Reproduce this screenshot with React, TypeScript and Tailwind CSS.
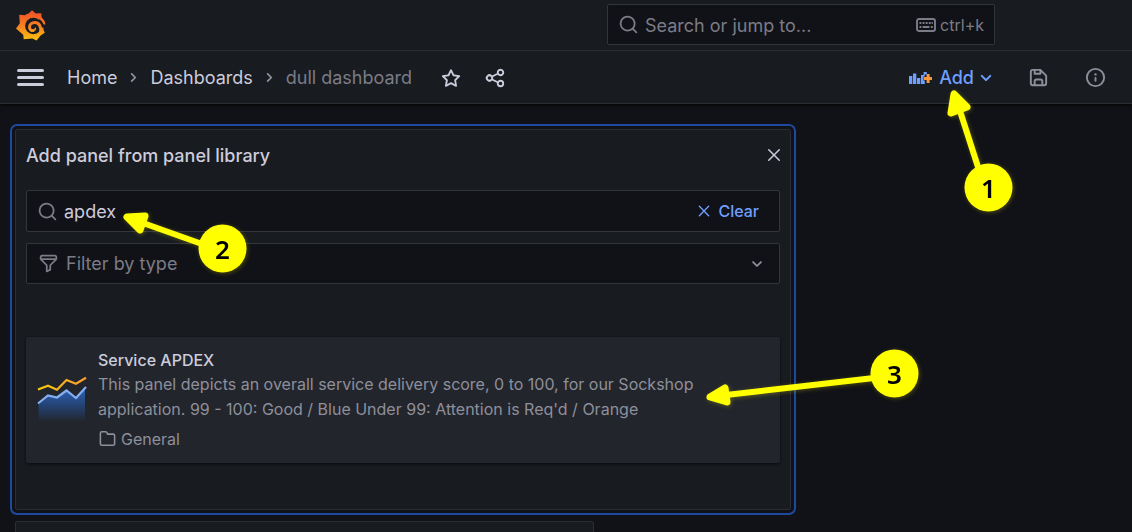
import type { ReactNode } from "react";

const paths = {
  search:
    "M21.71,20.29,18,16.61A9,9,0,1,0,16.61,18l3.68,3.68a1,1,0,0,0,1.42,0A1,1,0,0,0,21.71,20.29ZM11,18a7,7,0,1,1,7-7A7,7,0,0,1,11,18Z",
  times:
    "M13.41,12l6.3-6.29a1,1,0,1,0-1.42-1.42L12,10.59,5.71,4.29A1,1,0,0,0,4.29,5.71L10.59,12l-6.3,6.29a1,1,0,0,0,0,1.42,1,1,0,0,0,1.42,0L12,13.41l6.29,6.3a1,1,0,0,0,1.42,0,1,1,0,0,0,0-1.42Z",
  angleDown:
    "M17,9.17a1,1,0,0,0-1.41,0L12,12.71,8.46,9.17a1,1,0,0,0-1.41,0,1,1,0,0,0,0,1.42l4.24,4.24a1,1,0,0,0,1.42,0L17,10.59A1,1,0,0,0,17,9.17Z",
  angleRight:
    "M14.83,11.29,10.59,7.05a1,1,0,0,0-1.42,0,1,1,0,0,0,0,1.41L12.71,12,9.17,15.54a1,1,0,0,0,0,1.41,1,1,0,0,0,.71.29,1,1,0,0,0,.71-.29l4.24-4.24A1,1,0,0,0,14.83,11.29Z",
  star: "M22,9.67A1,1,0,0,0,21.14,9l-5.69-.83L12.9,3a1,1,0,0,0-1.8,0L8.55,8.16,2.86,9a1,1,0,0,0-.81.68,1,1,0,0,0,.25,1l4.13,4-1,5.68A1,1,0,0,0,6.9,21.44L12,18.77l5.1,2.67a.93.93,0,0,0,.46.12,1,1,0,0,0,.59-.19,1,1,0,0,0,.4-1l-1-5.68,4.13-4A1,1,0,0,0,22,9.67Zm-6.15,4a1,1,0,0,0-.29.88l.72,4.2-3.76-2a1.06,1.06,0,0,0-.94,0l-3.76,2,.72-4.2a1,1,0,0,0-.29-.88l-3-3,4.21-.61a1,1,0,0,0,.76-.55L12,5.7l1.88,3.82a1,1,0,0,0,.76.55l4.21.61Z",
  share:
    "M18,14a4,4,0,0,0-3.08,1.48l-5.1-2.35a3.64,3.64,0,0,0,0-2.26l5.1-2.35A4,4,0,1,0,14,6a4.17,4.17,0,0,0,.07.71L8.79,9.14a4,4,0,1,0,0,5.72l5.28,2.43A4.17,4.17,0,0,0,14,18a4,4,0,1,0,4-4ZM18,4a2,2,0,1,1-2,2A2,2,0,0,1,18,4ZM6,14a2,2,0,1,1,2-2A2,2,0,0,1,6,14Zm12,6a2,2,0,1,1,2-2A2,2,0,0,1,18,20Z",
  save: "M20.71,9.29l-6-6a1,1,0,0,0-.32-.21A1.09,1.09,0,0,0,14,3H6A3,3,0,0,0,3,6V18a3,3,0,0,0,3,3H18a3,3,0,0,0,3-3V10A1,1,0,0,0,20.71,9.29ZM9,5h4V7H9Zm6,14H9V16a1,1,0,0,1,1-1h4a1,1,0,0,1,1,1Zm4-1a1,1,0,0,1-1,1H17V16a3,3,0,0,0-3-3H10a3,3,0,0,0-3,3v3H6a1,1,0,0,1-1-1V6A1,1,0,0,1,6,5H7V8A1,1,0,0,0,8,9h6a1,1,0,0,0,1-1V6.41l4,4Z",
  info: "M12,2A10,10,0,1,0,22,12,10,10,0,0,0,12,2Zm0,18a8,8,0,1,1,8-8A8,8,0,0,1,12,20Zm0-8.5a1,1,0,0,0-1,1v3a1,1,0,0,0,2,0v-3A1,1,0,0,0,12,11.5Zm0-4a1.25,1.25,0,1,0,1.25,1.25A1.25,1.25,0,0,0,12,7.5Z",
  folder:
    "M19,5.5H12.72l-.32-1a3,3,0,0,0-2.84-2H5a3,3,0,0,0-3,3v13a3,3,0,0,0,3,3H19a3,3,0,0,0,3-3V8.5A3,3,0,0,0,19,5.5Zm1,13a1,1,0,0,1-1,1H5a1,1,0,0,1-1-1V5.5a1,1,0,0,1,1-1H9.56a1,1,0,0,1,.95.68l.54,1.64A1,1,0,0,0,12,7.5h7a1,1,0,0,1,1,1Z",
  filter:
    "M19,2H5A3,3,0,0,0,2,5V6.17a3,3,0,0,0,.25,1.2l0,.06a2.81,2.81,0,0,0,.59.86L9,14.41V21a1,1,0,0,0,.47.85A1,1,0,0,0,10,22a1,1,0,0,0,.45-.11l4-2A1,1,0,0,0,15,19V14.41l6.12-6.12a2.81,2.81,0,0,0,.59-.86l0-.06A3,3,0,0,0,22,6.17V5A3,3,0,0,0,19,2ZM13.29,13.29A1,1,0,0,0,13,14v4.38l-2,1V14a1,1,0,0,0-.29-.71L5.41,8H18.59ZM20,6H4V5A1,1,0,0,1,5,4H19a1,1,0,0,1,1,1Z",
};

function Icon({ name, className = "size-6" }: { name: keyof typeof paths; className?: string }) {
  return (
    <svg viewBox="0 0 24 24" fill="currentColor" aria-hidden="true" className={`shrink-0 ${className}`}>
      <path d={paths[name]} />
    </svg>
  );
}

function Logo() {
  return (
    <svg viewBox="0 0 32 32" fill="none" aria-hidden="true" className="size-8">
      <defs>
        <linearGradient id="logo" x1="0" y1="4" x2="0" y2="32" gradientUnits="userSpaceOnUse">
          <stop stopColor="#f1552a" />
          <stop offset="0.5" stopColor="#f68420" />
          <stop offset="1" stopColor="#fcc60c" />
        </linearGradient>
      </defs>
      <path
        fill="url(#logo)"
        d="M17 1.200 20.800 4.600Q23.500 3.900 26.200 4.300L26.700 8.600Q30 11.500 30.400 15.200L28.700 17.500 28.400 20.500 29.800 23.800 25.600 26.500 21.600 31.600 17.300 29.600 8.700 30.300 8.200 25.800 1 19.600 4.800 14.200 4.200 5.800 10 6.200Q11.800 4.900 13.600 4.500Z"
      />
      <circle cx="18.400" cy="17" r="8.300" fill="#181b1f" />
      <path fill="#181b1f" d="M23.500 9.800Q27 11.500 28.800 15.500L30.600 15.600 29.500 18.800 25 18.500Z" />
      <path
        stroke="url(#logo)"
        strokeWidth="3"
        strokeLinecap="round"
        d="M25.600 23C26.400 17.300 23.900 13.500 19.900 13.500C16.600 13.500 14.500 15.600 14.500 18.200C14.500 20.500 16.300 21.700 18 21.600"
      />
      <path
        stroke="url(#logo)"
        strokeWidth="1.600"
        strokeLinecap="round"
        d="M17.800 21.900C19.600 21.700 20.600 20.500 20.300 19.300"
      />
    </svg>
  );
}

function KeyboardIcon() {
  return (
    <svg viewBox="0 0 20 14" fill="none" aria-hidden="true" className="h-[14px] w-5 shrink-0">
      <rect x="1" y="1" width="18" height="12" rx="2" stroke="currentColor" strokeWidth="1.900" />
      <path
        d="M3.500 5h1.900M6.600 5h1.900M9.700 5h1.900M12.800 5h1.900M15.600 5h1.200M3.500 9h1.900M6.600 9h6.800M14.800 9h1.900"
        stroke="currentColor"
        strokeWidth="1.900"
      />
    </svg>
  );
}

function AddPanelIcon() {
  return (
    <svg viewBox="0 0 24 14" aria-hidden="true" className="h-[14px] w-6 shrink-0">
      <path
        fill="#6e9fff"
        d="M1 5h3.300v8H1zM5 2.500h3.300V13H5zM9 7h3.300v6H9zM13 4h2.600V1h3.200v2.500h-2v2h-1.300v4h1.300V13H13z"
      />
      <path fill="#f9983b" d="M18.600 3h3v2.900H24v3h-2.400v3h-3v-3h-2.700v-3h2.700z" />
    </svg>
  );
}

function ChartIcon() {
  return (
    <svg viewBox="0 0 50 48" fill="none" aria-hidden="true" className="h-12 w-[50px] shrink-0">
      <defs>
        <linearGradient id="area" x1="0" y1="12" x2="0" y2="46" gradientUnits="userSpaceOnUse">
          <stop stopColor="#2f64b8" />
          <stop offset="1" stopColor="#1f60c4" stopOpacity="0" />
        </linearGradient>
        <linearGradient id="line" x1="0" y1="0" x2="50" y2="0" gradientUnits="userSpaceOnUse">
          <stop stopColor="#f2cc0c" />
          <stop offset="1" stopColor="#ff9830" />
        </linearGradient>
      </defs>
      <path d="M1.500 27 11 19.500l9 2L29.500 14l9.500 7.500L48 12v34H1.500z" fill="url(#area)" />
      <path d="M1 27.500 11 19.500l9 2L29.500 14.500l9.500 7.500L49 11" stroke="#84aff1" strokeWidth="2.200" />
      <path d="m1 13.500 10-3.700 9 4L29.500 4 39 7.800 49 1.800" stroke="url(#line)" strokeWidth="2.200" />
    </svg>
  );
}

function IconButton({ label, children }: { label: string; children: ReactNode }) {
  return (
    <button type="button" aria-label={label} className="flex items-center justify-center">
      {children}
    </button>
  );
}

const markers = [
  { label: "1", x: 988.5, y: 187.5, line: "M978 167 960 111", head: "M954 94 951 113 967 107z" },
  { label: "2", x: 222.5, y: 248.5, line: "M202 244 143 223", head: "M127 217 145 216 140 230z" },
  { label: "3", x: 894.5, y: 373.5, line: "M874 378 726 395", head: "M710 397 725 388 727 402z" },
];

function Annotations() {
  return (
    <svg
      width="1132"
      height="532"
      viewBox="0 0 1132 532"
      className="pointer-events-none absolute top-0 left-0 drop-shadow-[1px_1px_2px_rgba(255,255,0,0.25)]"
    >
      {markers.map((m) => (
        <g key={m.label} stroke="#ffff00" fill="#ffff00" strokeLinejoin="round">
          <path d={m.line} strokeWidth="6" />
          <path d={m.head} strokeWidth="7" />
          <circle cx={m.x} cy={m.y} r="24" stroke="none" />
          <text
            x={m.x}
            y={m.y + 10}
            textAnchor="middle"
            stroke="none"
            className="fill-black font-['Noto_Sans',sans-serif] text-[26px] font-semibold"
          >
            {m.label}
          </text>
        </g>
      ))}
    </svg>
  );
}

export default function App() {
  return (
    <div className="relative min-h-screen overflow-hidden bg-[#111217] font-['Inter',sans-serif] text-[18px] text-[#ccccdc]">
      <header className="border-b border-[#2d2e34] bg-[#181b1f] shadow-[0_1px_4px_rgba(0,0,0,0.9)]">
        <div className="flex h-[51px] items-center border-b border-[#2d2e34] pr-[137px] pb-px pl-[15px]">
          <a href="#home" aria-label="Grafana">
            <Logo />
          </a>
          <label className="ml-auto flex h-[41px] w-[388px] items-center rounded-xs border border-[#34353b] bg-[#111217] px-[10px] text-[#7b7c87]">
            <Icon name="search" className="size-[21px]" />
            <input
              aria-label="Search or jump to"
              placeholder="Search or jump to..."
              className="ml-[5px] min-w-0 flex-1 bg-transparent pt-px pl-px outline-none placeholder:text-[#7b7c87]"
            />
            <KeyboardIcon />
            <span className="ml-1 text-base">ctrl+k</span>
          </label>
        </div>
        <div className="flex h-[52px] items-center pt-px pr-[25px] pl-[17px]">
          <button type="button" aria-label="Toggle menu" className="flex w-[27px] flex-col gap-1">
            <span className="h-[3px] rounded-full bg-[#ccccdc]" />
            <span className="h-[3px] rounded-full bg-[#ccccdc]" />
            <span className="h-[3px] rounded-full bg-[#ccccdc]" />
          </button>
          <nav aria-label="Breadcrumbs" className="ml-[23px] flex items-center gap-[6px]">
            <a href="#home">Home</a>
            <Icon name="angleRight" className="size-[21px] text-[#8e8f9b]" />
            <a href="#dashboards">Dashboards</a>
            <Icon name="angleRight" className="size-[21px] text-[#8e8f9b]" />
            <span className="text-[#7b7c87]">dull dashboard</span>
          </nav>
          <div className="ml-7 flex items-center gap-[22px]">
            <IconButton label="Mark as favorite">
              <Icon name="star" className="size-[22px]" />
            </IconButton>
            <IconButton label="Share dashboard">
              <Icon name="share" className="size-[22px]" />
            </IconButton>
          </div>
          <div className="ml-auto flex items-center text-[#8e8f9b]">
            <button type="button" className="flex items-center font-medium text-[#6e9fff]">
              <AddPanelIcon />
              <span className="ml-[7px]">Add</span>
              <Icon name="angleDown" className="size-6" />
            </button>
            <div className="ml-[29px] flex items-center gap-[34px]">
              <IconButton label="Save dashboard">
                <Icon name="save" className="size-[23px]" />
              </IconButton>
              <IconButton label="Dashboard info">
                <Icon name="info" className="size-[23px]" />
              </IconButton>
            </div>
          </div>
        </div>
      </header>

      <main className="flex flex-col gap-[11px] px-[15px] pt-[25px]">
        <section className="w-full max-w-[776px] rounded-xs border border-[#2b2d32] bg-[#181b1f] px-[10px] pb-[46px] outline-2 outline-offset-3 outline-[#1d4a9e]">
          <div className="flex h-[50px] items-center justify-between">
            <h2 className="font-medium">Add panel from panel library</h2>
            <button type="button" aria-label="Close" className="flex size-[22px] items-center justify-center -mr-[5px]">
              <Icon name="times" className="size-[18px]" />
            </button>
          </div>
          <div className="mt-[10px] flex h-[42px] items-center rounded-xs border border-[#34353b] bg-[#111217] pr-5 pl-[10px]">
            <Icon name="search" className="size-[21px] text-[#7b7c87]" />
            <input
              aria-label="Search by name or description"
              defaultValue="apdex"
              className="ml-[5px] min-w-0 flex-1 bg-transparent pl-px outline-none"
            />
            <button type="button" className="flex items-center gap-[6px] text-base font-medium text-[#6e9fff]">
              <Icon name="times" className="size-4" />
              Clear
            </button>
          </div>
          <div className="mt-[11px] flex h-[41px] items-center rounded-xs border border-[#34353b] bg-[#111217] px-[11px] text-[#7b7c87]">
            <Icon name="filter" className="size-[21px]" />
            <select aria-label="Filter by type" className="ml-[7px] min-w-0 flex-1 appearance-none bg-transparent outline-none">
              <option>Filter by type</option>
            </select>
            <Icon name="angleDown" className="size-[22px] text-[#8e8f9b]" />
          </div>
          <article className="mt-[53px] flex items-center rounded-xs bg-[#22252b] pt-[11px] pr-3 pb-3 pl-[11px] shadow-[0_1px_3px_rgba(0,0,0,0.6)]">
            <ChartIcon />
            <div className="ml-[11px] min-w-0 flex-1 text-base text-[#8e8f9b]">
              <h3 className="leading-6 font-medium text-[#ccccdc]">Service APDEX</h3>
              <p className="max-w-[620px] leading-[25px]">
                This panel depicts an overall service delivery score, 0 to 100, for our Sockshop application. 99 - 100:
                Good / Blue Under 99: Attention is Req'd / Orange
              </p>
              <a href="#general" className="mt-[5px] flex items-center gap-1 leading-6">
                <Icon name="folder" className="mb-[2px] size-[19px]" />
                General
              </a>
            </div>
          </article>
        </section>
        <section className="h-16 w-full max-w-[579px] rounded-xs border border-[#2b2d32] bg-[#181b1f] -mb-16" />
      </main>
      <Annotations />
    </div>
  );
}
